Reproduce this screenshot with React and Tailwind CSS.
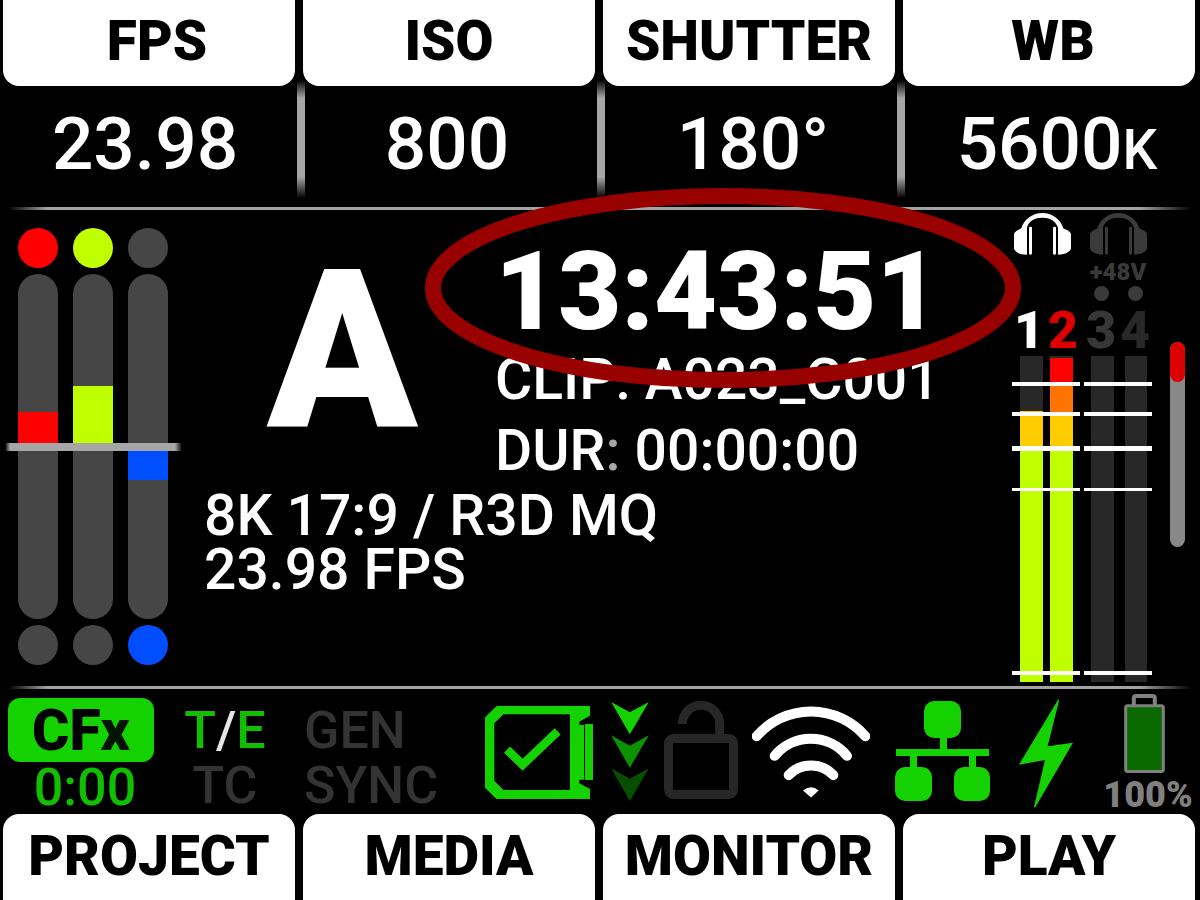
import React from 'react';

const settings = [
    { label: 'FPS', value: '23.98', labelPad: 'pl-4', pad: 'pr-3' },
    { label: 'ISO', value: '800', labelPad: 'px-1', pad: 'pr-2' },
    { label: 'SHUTTER', value: '180°', labelPad: 'px-1', pad: 'pl-1' },
    { label: 'WB', value: '5600', unit: 'K', labelPad: 'pl-2', pad: 'pl-3' }
];

const menus = ['PROJECT', 'MEDIA', 'MONITOR', 'PLAY'];

// over / under are pixels away from the centre line
const exposure = [
    { id: 'red', top: 'bg-[#ff0000]', bottom: 'bg-[#464646]', fill: 'bg-[#ff0000]', over: 31, under: 0 },
    { id: 'green', top: 'bg-[#c0ff00]', bottom: 'bg-[#464646]', fill: 'bg-[#c0ff00]', over: 57, under: 0 },
    { id: 'blue', top: 'bg-[#464646]', bottom: 'bg-[#004eff]', fill: 'bg-[#004eff]', over: 0, under: 29 }
];

const ticks = [
    { y: 26, h: 4 },
    { y: 56, h: 4 },
    { y: 90, h: 5 },
    { y: 132, h: 3 },
    { y: 315, h: 4 }
];

const audio = [
    {
        id: 'inputs-1-2',
        icon: 'self-start ml-0.5 text-white',
        phantom: false,
        channels: [
            {
                name: '1',
                color: 'text-white',
                x: 8,
                w: 23,
                bands: [
                    { y: 55, h: 35, fill: '#ffcc00' },
                    { y: 90, h: 236, fill: '#c0ff00' }
                ]
            },
            {
                name: '2',
                color: 'text-[#dc0000]',
                x: 38,
                w: 23,
                bands: [
                    { y: 2, h: 26, fill: '#ff0000' },
                    { y: 28, h: 28, fill: '#ff7300' },
                    { y: 56, h: 34, fill: '#ffcc00' },
                    { y: 90, h: 236, fill: '#c0ff00' }
                ]
            }
        ]
    },
    {
        id: 'inputs-3-4',
        icon: 'self-center text-[#3a3a3a]',
        phantom: true,
        channels: [
            { name: '3', color: 'text-[#373737]', x: 7, w: 23, bands: [] },
            { name: '4', color: 'text-[#282828]', x: 41, w: 22, bands: [] }
        ]
    }
];

const Rule = () => (
    <div className="h-[3px] mx-2 bg-[linear-gradient(to_right,transparent,#a3a3a3_40px,#a3a3a3_calc(100%_-_52px),transparent)]" />
);

const Headphones = ({ className }) => (
    <svg className={`w-[57px] h-[42px] ${className}`} viewBox="42 40 171 126" fill="currentColor" aria-hidden="true">
        <path d="M42 102Q44 97 50 93L64 86C72 58 98 40 127 40C156 40 182 58 190 86L205 93Q211 97 213 102V148Q204 165 174 165V84L172 80C166 64 150 54 127 54C105 54 88 64 82 80L81 84V165Q50 165 42 148Z" />
        <rect x="87" y="81" width="9" height="84" rx="4" />
        <rect x="159" y="81" width="9" height="84" rx="4" />
    </svg>
);

const ExposureMeter = ({ meter }) => (
    <div className="flex flex-col gap-1.5 w-10">
        <div className={`h-10 rounded-full ${meter.top}`} />
        <div className="flex flex-col gap-2">
            <div className="h-[169px] flex flex-col justify-end bg-[#464646] rounded-t-[20px]">
                <div className={meter.fill} style={{ height: meter.over }} />
            </div>
            <div className="h-[168px] bg-[#464646] rounded-b-[20px]">
                <div className={meter.fill} style={{ height: meter.under }} />
            </div>
        </div>
        <div className={`h-10 rounded-full ${meter.bottom}`} />
    </div>
);

const AudioGroup = ({ group }) => (
    <div className="w-[68px] flex flex-col">
        <Headphones className={group.icon} />
        <div className="h-[51px] pt-[3px] flex flex-col items-center text-[#3a3a3a]">
            {group.phantom && (
                <>
                    <span className="text-[24px] leading-[28px] font-black">+48V</span>
                    <div className="self-stretch grid grid-cols-2 justify-items-center">
                        <span className="size-[15px] rounded-full bg-[#3a3a3a]" />
                        <span className="size-[15px] rounded-full bg-[#3a3a3a]" />
                    </div>
                </>
            )}
        </div>
        <div className="grid grid-cols-2 text-center text-[52px] leading-[50px] font-black">
            {group.channels.map((channel) => (
                <span key={channel.name} className={channel.color}>{channel.name}</span>
            ))}
        </div>
        <svg className="w-[68px] h-[326px]" viewBox="0 0 68 326" shapeRendering="crispEdges" role="img" aria-label="Audio level">
            {group.channels.map((channel) => (
                <g key={channel.name}>
                    <rect x={channel.x} y="0" width={channel.w} height="326" fill="#282828" />
                    {channel.bands.map((band) => (
                        <rect key={band.y} x={channel.x} y={band.y} width={channel.w} height={band.h} fill={band.fill} />
                    ))}
                </g>
            ))}
            {ticks.map((tick) => (
                <rect key={tick.y} x="0" y={tick.y} width="68" height={tick.h} fill="#ffffff" />
            ))}
        </svg>
    </div>
);

const StatusIcons = () => (
    <div className="flex items-center">
        {/* Media card */}
        <svg className="w-[108px] h-[93px] mt-0.5" viewBox="75 78 324 279" fill="#14d200" aria-hidden="true">
            <path
                fillRule="evenodd"
                d="M110 78H390V107L358 125V135H372V299H358V310L390 327V357H109L75 323V112ZM130 103L103 130V302L130 330H330V103Z"
            />
            <rect x="375" y="132" width="24" height="168" />
            <path d="M141 209L188 254L293 154" fill="none" stroke="#14d200" strokeWidth="26" />
        </svg>

        {/* Offload arrows */}
        <svg className="w-[38px] h-[99px] ml-[18px]" viewBox="453 65 113 297" aria-hidden="true">
            <path d="M453 65L509 96L566 65L509 162Z" fill="#14d200" />
            <path d="M453 165L509 196L566 165L509 262Z" fill="#0c9200" />
            <path d="M453 264L509 295L566 264L509 362Z" fill="#064f00" />
        </svg>

        {/* Unlocked */}
        <svg className="w-[74px] h-[98px] ml-[15px] mb-1" viewBox="612 63 222 294" fill="none" stroke="#272727" strokeWidth="27" aria-hidden="true">
            <rect x="625.5" y="175.5" width="195" height="168" rx="14" />
            <path d="M667 132A56 56 0 0 1 779 132V170" />
        </svg>

        {/* WiFi */}
        <svg className="w-[118px] h-[92px] ml-[14px]" viewBox="36 78 354 275" fill="none" stroke="#ffffff" strokeWidth="30" strokeLinecap="round" aria-hidden="true">
            <path d="M50 168A216 216 0 0 1 376 168" />
            <path d="M104 227A141 141 0 0 1 321 227" />
            <path d="M146 285A92 92 0 0 1 280 285" />
            <path d="M189 331Q213 311 236 331L213 352Z" fill="#ffffff" stroke="none" />
        </svg>

        {/* Network */}
        <svg className="w-[95px] h-[100px] ml-[25px] mb-0.5" viewBox="465 63 285 300" fill="#14d200" aria-hidden="true">
            <rect x="552" y="63" width="111" height="111" rx="30" />
            <rect x="600" y="170" width="21" height="40" />
            <rect x="468" y="207" width="279" height="21" />
            <rect x="510" y="225" width="21" height="40" />
            <rect x="687" y="225" width="21" height="40" />
            <rect x="465" y="261" width="111" height="102" rx="30" />
            <rect x="642" y="261" width="108" height="102" rx="30" />
        </svg>

        {/* External power */}
        <svg className="w-[54px] h-[109px] ml-[29px] mt-1" viewBox="57 58 162 327" fill="#14d200" aria-hidden="true">
            <path d="M175 59L177 63L143 200L219 189L105 384L102 382L135 241L57 255Z" />
        </svg>
    </div>
);

const Battery = () => (
    <div className="w-[96px] self-start pt-[5px] flex flex-col items-center">
        <svg className="w-[41px] h-[79px] mr-2" viewBox="373 41 122 237" aria-hidden="true">
            <path d="M402 76V54Q402 47 409 47H458Q465 47 465 54V76" fill="none" stroke="#808080" strokeWidth="12" />
            <rect x="377.5" y="76.5" width="113" height="197" rx="6" fill="#0a6a00" stroke="#808080" strokeWidth="9" />
        </svg>
        <span className="text-[36px] leading-[44px] font-black text-[#808080]">100%</span>
    </div>
);

export default function App() {
    return (
        <div className="min-h-screen flex flex-col bg-black text-white overflow-hidden font-['Roboto',sans-serif]">
            {/* Camera settings */}
            <header>
                <div className="relative z-10 grid grid-cols-4 gap-2 pl-[3px] pr-[5px]">
                    {settings.map((item) => (
                        <button key={item.label} className={`h-[86px] pb-1 bg-white text-black rounded-b-2xl text-[55px] leading-[64px] font-black ${item.labelPad}`}>
                            {item.label}
                        </button>
                    ))}
                </div>
                <div className="-mt-1.5 h-[127px] flex pl-[5px] pr-[3px]">
                    {settings.map((item, i) => (
                        <React.Fragment key={item.label}>
                            {i > 0 && (
                                <div className="w-2 h-[118px] bg-[linear-gradient(to_bottom,transparent,#a6a6a6_18px,#a6a6a6_97px,transparent)]" />
                            )}
                            <div className="flex-1 flex items-center justify-center">
                                <span className={`text-[73px] leading-[80px] font-medium ${item.pad}`}>
                                    {item.value}
                                    {item.unit && <span className="text-[55px] leading-none">{item.unit}</span>}
                                </span>
                            </div>
                        </React.Fragment>
                    ))}
                </div>
            </header>

            <Rule />

            <main className="flex-1 flex">
                <div className="relative self-start flex gap-[15px] pl-[18px] pt-[18px]">
                    {exposure.map((meter) => (
                        <ExposureMeter key={meter.id} meter={meter} />
                    ))}
                    {/* Centre line lies across all three meters */}
                    <div className="absolute left-[5px] top-[233px] w-[177px] h-2 bg-[linear-gradient(to_right,transparent,#a6a6a6_5px,#a6a6a6_170px,transparent)]" />
                </div>

                <div className="flex-1 pl-9 pt-[30px]">
                    <div className="flex">
                        <div className="w-[291px] pl-[63px] text-[221px] leading-[222px] font-black">A</div>
                        <div className="relative">
                            <div className="text-[109px] leading-[104px] font-black">13:43:51</div>
                            <div className="text-[57px] leading-[71px] font-medium">CLIP: A023_C001</div>
                            <div className="text-[57px] leading-[71px] font-medium">
                                DUR<span className="text-[#a6a6a6]">:</span> 00:00:00
                            </div>
                            {/* Highlight ring over the timecode */}
                            <svg className="absolute -left-[70px] -top-[52px] w-[596px] h-[200px] max-w-none" viewBox="0 0 596 200" fill="none" aria-hidden="true">
                                <ellipse cx="298" cy="100" rx="290" ry="92" stroke="#990000" strokeWidth="16" />
                            </svg>
                        </div>
                    </div>
                    <div className="mt-[3px] text-[57px] leading-[54px] font-medium">
                        <p>8K 17:9 / R3D MQ</p>
                        <p>23.98 FPS</p>
                    </div>
                </div>

                <div className="flex gap-1 pt-[3px]">
                    {audio.map((group) => (
                        <AudioGroup key={group.id} group={group} />
                    ))}
                </div>

                <div className="pl-[18px] pr-[15px] pt-[132px]">
                    <div className="w-[15px] h-[205px] rounded-full bg-[#888888]">
                        <div className="h-10 rounded-full bg-[#dc0000]" />
                    </div>
                </div>
            </main>

            <Rule />

            {/* Status bar */}
            <section className="h-[125px] flex justify-between pl-2 pr-1">
                <div className="flex pt-[9px] text-[52px] leading-[55px] font-medium">
                    <div className="w-[146px] text-center">
                        <div className="h-16 rounded-xl bg-[#14d200] text-black text-[57px] leading-[66px] font-black">
                            CF<span className="text-[#001500]">x</span>
                        </div>
                        <div className="pl-2 leading-[52px] text-[#12be00]">0:00</div>
                    </div>
                    <div className="w-[142px] pt-[5px] text-center text-[#333333]">
                        <div className="text-[#12be00]">
                            T<span className="text-[#e6e6e6]">/</span>E
                        </div>
                        <div>TC</div>
                    </div>
                    <div className="pt-[5px] pl-2 text-[#333333]">
                        <div>GEN</div>
                        <div>SYNC</div>
                    </div>
                </div>
                <div className="flex gap-[27px]">
                    <StatusIcons />
                    <Battery />
                </div>
            </section>

            <nav className="grid grid-cols-4 gap-2 pl-[3px] pr-[5px]">
                {menus.map((label) => (
                    <button key={label} className="h-[86px] pb-0.5 bg-white text-black rounded-t-2xl text-[55px] leading-[64px] font-black">
                        {label}
                    </button>
                ))}
            </nav>
        </div>
    );
}
